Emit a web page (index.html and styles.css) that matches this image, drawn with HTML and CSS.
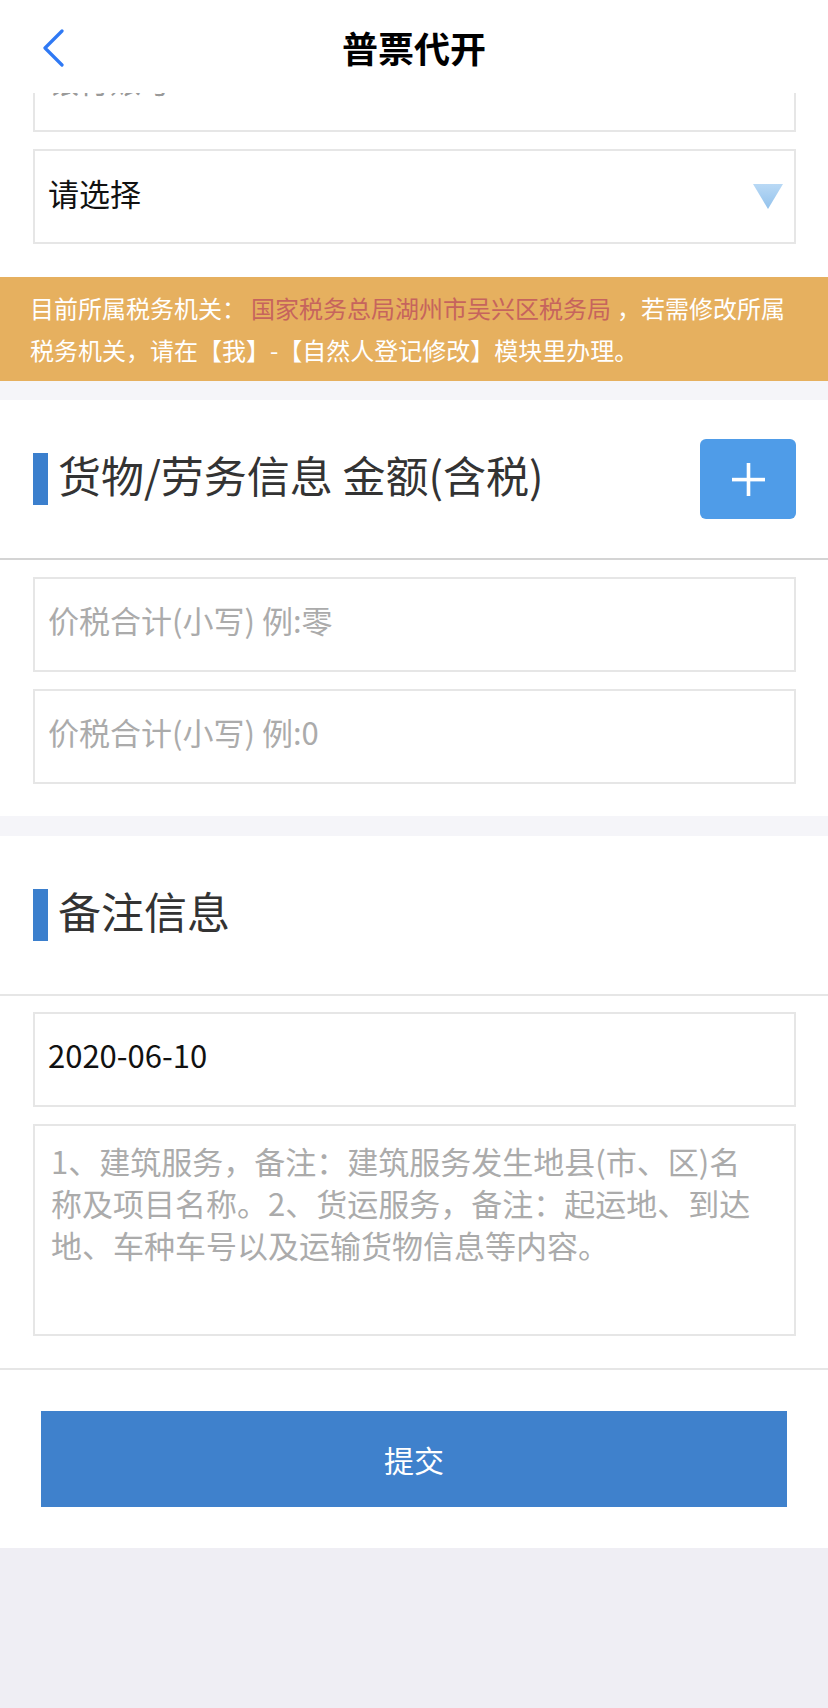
FILE: index.html
```html
<!DOCTYPE html>
<html lang="zh-CN">
<head>
<meta charset="utf-8">
<title>普票代开</title>
<link rel="stylesheet" href="styles.css">
</head>
<body>
<header class="topbar">
  <div class="topbar-left">
    <svg class="back" width="22" height="38" viewBox="0 0 22 38" aria-hidden="true">
      <polyline points="20,2 3,19 20,36" fill="none" stroke="#2f79f4" stroke-width="3.2" stroke-linecap="round" stroke-linejoin="round"/>
    </svg>
  </div>
  <h1 class="title">普票代开</h1>
  <div class="topbar-right"></div>
</header>

<main class="scroll">
  <section class="card card-top">
    <div class="fields">
      <input class="field" type="text" placeholder="银行账号">
      <div class="field select">
        <span class="select-text">请选择</span>
        <svg width="30" height="25" viewBox="0 0 30 25" aria-hidden="true">
          <defs>
            <linearGradient id="tri" x1="0" y1="0" x2="0" y2="1">
              <stop offset="0" stop-color="#b9d9f5"/>
              <stop offset="1" stop-color="#93c2ec"/>
            </linearGradient>
          </defs>
          <polygon points="0,0 30,0 15,25" fill="url(#tri)"/>
        </svg>
      </div>
    </div>
  </section>

  <p class="notice"><span>目前所属税务机关：</span><span class="org">国家税务总局湖州市吴兴区税务局</span><span>，若需修改所属</span><span>税务机关，请在【我】-【自然人登记修改】模块里办理。</span></p>

  <section class="card">
    <div class="card-head">
      <h2 class="sec-title"><span class="bar"></span><span class="sec-text">货物/劳务信息 金额(含税)</span></h2>
      <button class="add" type="button" aria-label="添加">
        <svg width="33" height="33" viewBox="0 0 33 33" aria-hidden="true">
          <rect x="0" y="14.8" width="33" height="3.6" fill="#fff"/>
          <rect x="14.7" y="0" width="3.6" height="33" fill="#fff"/>
        </svg>
      </button>
    </div>
    <div class="divider dark"></div>
    <div class="fields list">
      <input class="field" type="text" placeholder="价税合计(小写) 例:零">
      <input class="field" type="text" placeholder="价税合计(小写) 例:0">
    </div>
  </section>

  <section class="card">
    <div class="card-head">
      <h2 class="sec-title"><span class="bar"></span><span class="sec-text">备注信息</span></h2>
    </div>
    <div class="divider"></div>
    <div class="fields list2">
      <input class="field value" type="text" value="2020-06-10">
      <textarea class="area" placeholder="1、建筑服务，备注：建筑服务发生地县(市、区)名称及项目名称。2、货运服务，备注：起运地、到达地、车种车号以及运输货物信息等内容。"></textarea>
    </div>
    <div class="divider"></div>
    <div class="actions">
      <button class="submit" type="button">提交</button>
    </div>
  </section>
</main>
</body>
</html>
```

FILE: styles.css
```css
* {
  box-sizing: border-box;
}

html, body {
  margin: 0;
  padding: 0;
}

body {
  width: 828px;
  min-height: 1708px;
  background: #efeef4;
  font-family: "Noto Sans CJK SC", "Noto Sans", sans-serif;
  color: #111;
}

.topbar {
  height: 93px;
  background: #fff;
  display: grid;
  grid-template-columns: 1fr auto 1fr;
  align-items: center;
  padding-top: 3px;
}

.topbar-left {
  padding-left: 42px;
  display: flex;
  align-items: center;
}

.back {
  display: block;
}

.title {
  margin: 0;
  font-size: 36px;
  line-height: 40px;
  font-weight: 700;
  color: #000;
  padding-bottom: 3px;
}

.scroll {
  overflow: hidden;
  background: #f5f5f9;
}

.card {
  background: #fff;
}

.card-top {
  margin-top: -56px;
  padding: 0 32px 33px 33px;
}

.fields {
  display: flex;
  flex-direction: column;
  gap: 17px;
}

.field {
  display: block;
  width: 100%;
  height: 95px;
  margin: 0;
  border: 2px solid #e6e6e6;
  border-radius: 0;
  background: #fff;
  padding: 0 14px 10px 13px;
  font-family: "Noto Sans CJK SC", "Noto Sans", sans-serif;
  font-size: 31px;
  color: #111;
  outline: none;
}

.field::placeholder {
  color: #ababab;
}

.card-top .field::placeholder {
  color: #9a9a9a;
}

.select {
  display: flex;
  align-items: center;
  justify-content: space-between;
  padding: 0 11px 0 13px;
  line-height: 1;
}

.select-text {
  margin-bottom: 8px;
}

.select svg {
  display: block;
}

.notice {
  margin: 0 0 19px 0;
  background: #e6b05f;
  color: #fff;
  font-size: 24px;
  line-height: 42px;
  padding: 10px 30px 10px 30px;
}

.org {
  color: #c6645d;
  padding: 0 6px 0 5px;
}

.card + .card {
  margin-top: 20px;
}

.card-head {
  height: 158px;
  display: flex;
  align-items: center;
  justify-content: space-between;
  padding: 0 32px 0 33px;
}

.sec-title {
  margin: 0;
  display: flex;
  align-items: center;
  font-size: 43px;
  line-height: 52px;
  font-weight: 400;
  color: #333;
}

.sec-text {
  margin-bottom: 10px;
}

.bar {
  width: 15px;
  height: 52px;
  background: #3b7fcd;
  margin-right: 10px;
  flex: none;
}

.add {
  width: 96px;
  height: 80px;
  border: 0;
  border-radius: 6px;
  background: #4f9ce8;
  padding: 0;
  display: flex;
  align-items: center;
  justify-content: center;
}

.add svg {
  display: block;
}

.divider {
  height: 2px;
  background: #e6e6e6;
}

.divider.dark {
  background: #d4d4d4;
}

.list {
  padding: 17px 32px 32px 33px;
}

.list2 {
  padding: 16px 32px 32px 33px;
}

.value {
  color: #111;
}

.area {
  display: block;
  width: 100%;
  height: 212px;
  margin: 0;
  border: 2px solid #e6e6e6;
  border-radius: 0;
  padding: 14px 33px 14px 16px;
  font-family: "Noto Sans CJK SC", "Noto Sans", sans-serif;
  font-size: 31px;
  line-height: 42px;
  color: #111;
  resize: none;
  outline: none;
  overflow: hidden;
}

.area::placeholder {
  color: #ababab;
}

.actions {
  padding: 41px;
}

.submit {
  display: block;
  width: 100%;
  height: 96px;
  border: 0;
  border-radius: 0;
  background: #3f81cc;
  color: #fff;
  font-family: "Noto Sans CJK SC", "Noto Sans", sans-serif;
  font-size: 30px;
  padding: 0;
}
```
